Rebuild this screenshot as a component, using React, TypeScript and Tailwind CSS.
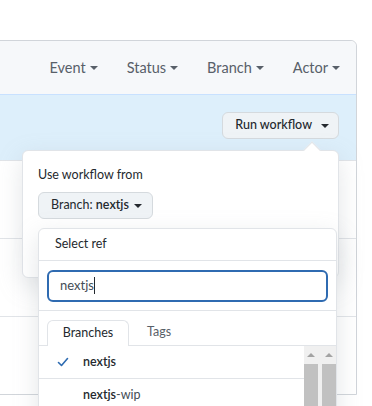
import React from 'react';

const font = { fontFamily: 'Lato, "Segoe UI", Arial, sans-serif' };

function Caret({ className = '' }: { className?: string }) {
  return (
    <span
      className={`inline-block w-0 h-0 border-x-[4px] border-x-transparent border-t-[4px] border-t-current align-middle ${className}`}
    />
  );
}

function FilterItem({ label }: { label: string }) {
  return (
    <div className="flex items-center gap-[4px] text-[14.5px] text-[#586069]">
      <span>{label}</span>
      <Caret />
    </div>
  );
}

function ScrollColumn() {
  return (
    <div className="w-[14px] flex flex-col items-center">
      <div className="h-[18px] flex items-center justify-center">
        <span className="w-0 h-0 border-x-[4px] border-x-transparent border-b-[4px] border-b-[#a3a3a3]" />
      </div>
      <div className="w-full flex-1 bg-[#c1c1c1]" />
    </div>
  );
}

export default function App() {
  return (
    <div className="relative w-[372px] h-[406px] overflow-hidden bg-white text-[#24292e]" style={font}>
      <div className="pt-[40px] pr-[15px]">
        <div className="ml-[-8px] border border-[#d1d5da] rounded-tr-md">
          <div className="h-[54px] bg-[#f6f8fa] border-b border-[#c8e1ff] rounded-tr-md flex items-center justify-end gap-[29px] pr-[16px]">
            <FilterItem label="Event" />
            <FilterItem label="Status" />
            <FilterItem label="Branch" />
            <FilterItem label="Actor" />
          </div>
          <div className="h-[65px] bg-[#ddeffb] flex justify-end items-start pt-[17px] pr-[17px]">
            <button className="h-[27px] pl-[12px] pr-[9px] flex items-center gap-[9px] rounded-md border border-[#d5dade] bg-[#eff3f6] text-[12.5px] font-medium text-[#24292e]">
              Run workflow
              <Caret />
            </button>
          </div>
          <div className="h-[78px] border-t border-[#e1e4e8]" />
          <div className="h-[78px] border-t border-[#e1e4e8]" />
          <div className="h-[78px] border-t border-[#e1e4e8]" />
        </div>
      </div>

      {/* run workflow popover */}
      <div className="absolute left-[22px] top-[150px] w-[317px] h-[128px] bg-white border border-[#e1e4e8] rounded-md shadow-[0_8px_24px_rgba(149,157,165,0.25)]">
        <div className="absolute -top-[7px] right-[20px] w-[12px] h-[12px] bg-white border-l border-t border-[#e1e4e8] rotate-45" />
        <div className="px-[15px] pt-[15px]">
          <p className="text-[12.5px] leading-[18px]">Use workflow from</p>
          <button className="mt-[8px] h-[27px] pl-[12px] pr-[10px] flex items-center gap-[5px] rounded-md border border-[#d5dade] bg-[#eff3f6] text-[12.5px]">
            <span>
              Branch: <span className="font-semibold">nextjs</span>
            </span>
            <Caret />
          </button>
        </div>
      </div>

      {/* select ref menu */}
      <div className="absolute left-[38px] top-[228px] w-[299px] h-[200px] bg-white border border-[#e1e4e8] rounded-md shadow-[0_8px_24px_rgba(149,157,165,0.25)] flex flex-col">
        <div className="h-[32px] border-b border-[#e1e4e8] flex items-center px-[16px] text-[12.5px]">
          Select ref
        </div>
        <div className="h-[50px] border-b border-[#e1e4e8] px-[8px] flex items-center">
          <div className="w-full h-[32px] rounded-md border-2 border-[#2f6bb1] flex items-center px-[11px] text-[13px] text-[#444d56]">
            nextjs
            <span className="w-px h-[17px] bg-[#24292e]" />
          </div>
        </div>
        <div className="pt-[8px] flex items-end border-b border-[#e1e4e8]">
          <div className="w-[8px]" />
          <div className="h-[26px] w-[82px] -mb-px bg-white border border-b-0 border-[#e1e4e8] rounded-t-md flex items-center justify-center text-[12.5px]">
            Branches
          </div>
          <div className="h-[26px] px-[18px] flex items-center text-[12.5px] text-[#586069]">Tags</div>
        </div>
        <div className="flex flex-1">
          <div className="flex-1">
            <div className="h-[33px] border-b border-[#e1e4e8] flex items-center">
              <div className="w-[44px] flex justify-end pr-[14px]">
                <svg width="12" height="12" viewBox="0 0 12 12" fill="none">
                  <path d="M1.5 6.5 L4.5 9.5 L10.5 2.5" stroke="#2d6bb1" strokeWidth="1.6" strokeLinecap="round" strokeLinejoin="round" />
                </svg>
              </div>
              <span className="text-[12.5px] font-semibold">nextjs</span>
            </div>
            <div className="h-[33px] border-b border-[#e1e4e8] flex items-center pl-[44px] text-[12.5px]">
              <span className="font-semibold">nextjs</span>
              <span className="text-[#444d56]">-wip</span>
            </div>
          </div>
          <div className="w-[32px] bg-[#f0f0f0] flex gap-[4px]">
            <ScrollColumn />
            <ScrollColumn />
          </div>
        </div>
      </div>
    </div>
  );
}
